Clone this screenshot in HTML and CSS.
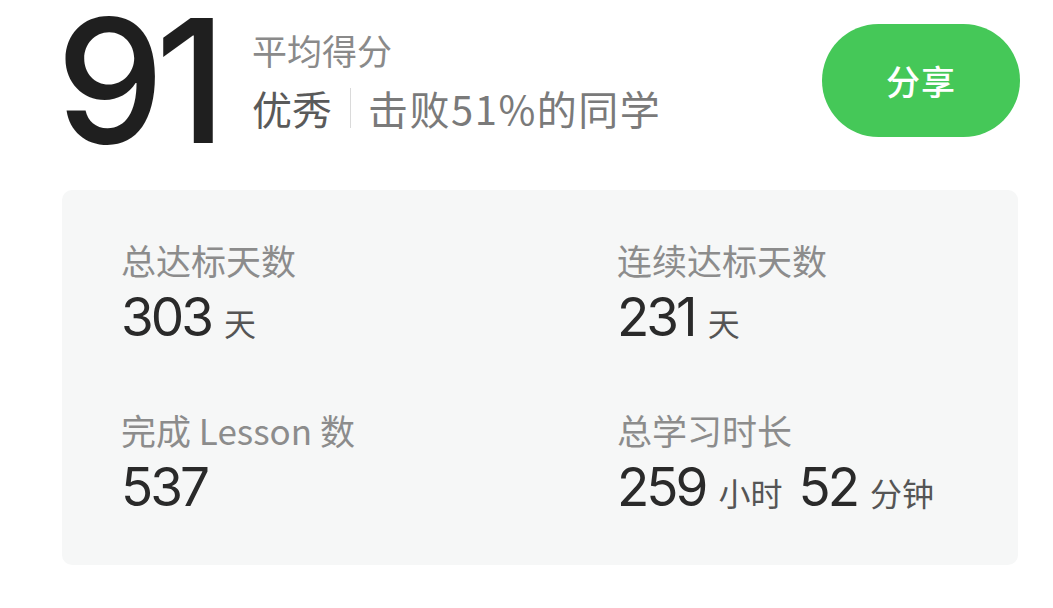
FILE: index.html
```html
<!DOCTYPE html>
<html lang="zh-CN">
<head>
<meta charset="utf-8">
<link rel="stylesheet" href="styles.css">
</head>
<body>
<div class="page">
  <header class="top">
    <div class="score">91</div>
    <div class="summary">
      <div class="caption">平均得分</div>
      <div class="result"><span class="level">优秀</span><span class="divider"></span><span class="beat">击败51%的同学</span></div>
    </div>
    <button class="share">分享</button>
  </header>
  <section class="card">
    <div class="stat">
      <div class="label">总达标天数</div>
      <div class="value"><span class="num">303</span><span class="unit">天</span></div>
    </div>
    <div class="stat">
      <div class="label">连续达标天数</div>
      <div class="value"><span class="num">231</span><span class="unit">天</span></div>
    </div>
    <div class="stat">
      <div class="label">完成 Lesson 数</div>
      <div class="value"><span class="num">537</span></div>
    </div>
    <div class="stat">
      <div class="label">总学习时长</div>
      <div class="value"><span class="num">259</span><span class="unit">小时</span><span class="num">52</span><span class="unit">分钟</span></div>
    </div>
  </section>
</div>
</body>
</html>
```

FILE: styles.css
```css
* { box-sizing: border-box; }
html, body { margin: 0; padding: 0; background: #ffffff; }
body {
  font-family: "Noto Sans CJK SC", "Noto Sans", sans-serif;
  width: 1053px;
  height: 608px;
  overflow: hidden;
}
.page {
  padding: 0 33px 0 62px;
}
.top {
  display: flex;
  align-items: flex-start;
  height: 190px;
}
.score {
  font-family: "Inter", "Noto Sans", sans-serif;
  font-size: 172px;
  font-weight: 450;
  line-height: 160px;
  color: #1f1f1f;
  letter-spacing: -9px;
  margin-left: -6px;
  width: 196px;
}
.summary {
  display: flex;
  flex-direction: column;
  margin-top: 24px;
}
.caption {
  font-size: 35px;
  line-height: 52px;
  color: #8a8a8a;
}
.result {
  display: flex;
  align-items: center;
  margin-top: 6px;
  font-size: 40px;
  line-height: 52px;
}
.level { color: #5a5a5a; }
.divider {
  width: 1px;
  height: 40px;
  background: #dadada;
  margin: 0 17px 0 18px;
}
.beat { color: #7a7a7a; letter-spacing: 1.5px; }
.share {
  margin-left: auto;
  margin-top: 24px;
  width: 198px;
  height: 113px;
  border: none;
  border-radius: 57px;
  background: #45c858;
  color: #ffffff;
  font-family: "Noto Sans CJK SC", sans-serif;
  font-size: 34px;
  font-weight: 500;
  letter-spacing: 1px;
}
.card {
  width: 956px;
  height: 375px;
  background: #f6f7f7;
  border-radius: 10px;
  padding: 44px 59px 0 59px;
  display: grid;
  grid-template-columns: 496px 1fr;
  align-content: start;
  row-gap: 53px;
}
.label {
  font-size: 35px;
  line-height: 52px;
  color: #8c8c8c;
}
.value {
  display: flex;
  align-items: baseline;
  margin-top: 2px;
  line-height: 58px;
}
.num {
  font-family: "Inter", "Noto Sans", sans-serif;
  font-size: 53px;
  color: #2a2a2a;
  letter-spacing: -3px;
}
.unit {
  font-size: 32px;
  color: #555555;
  margin: 0 16px 0 13px;
}
```
